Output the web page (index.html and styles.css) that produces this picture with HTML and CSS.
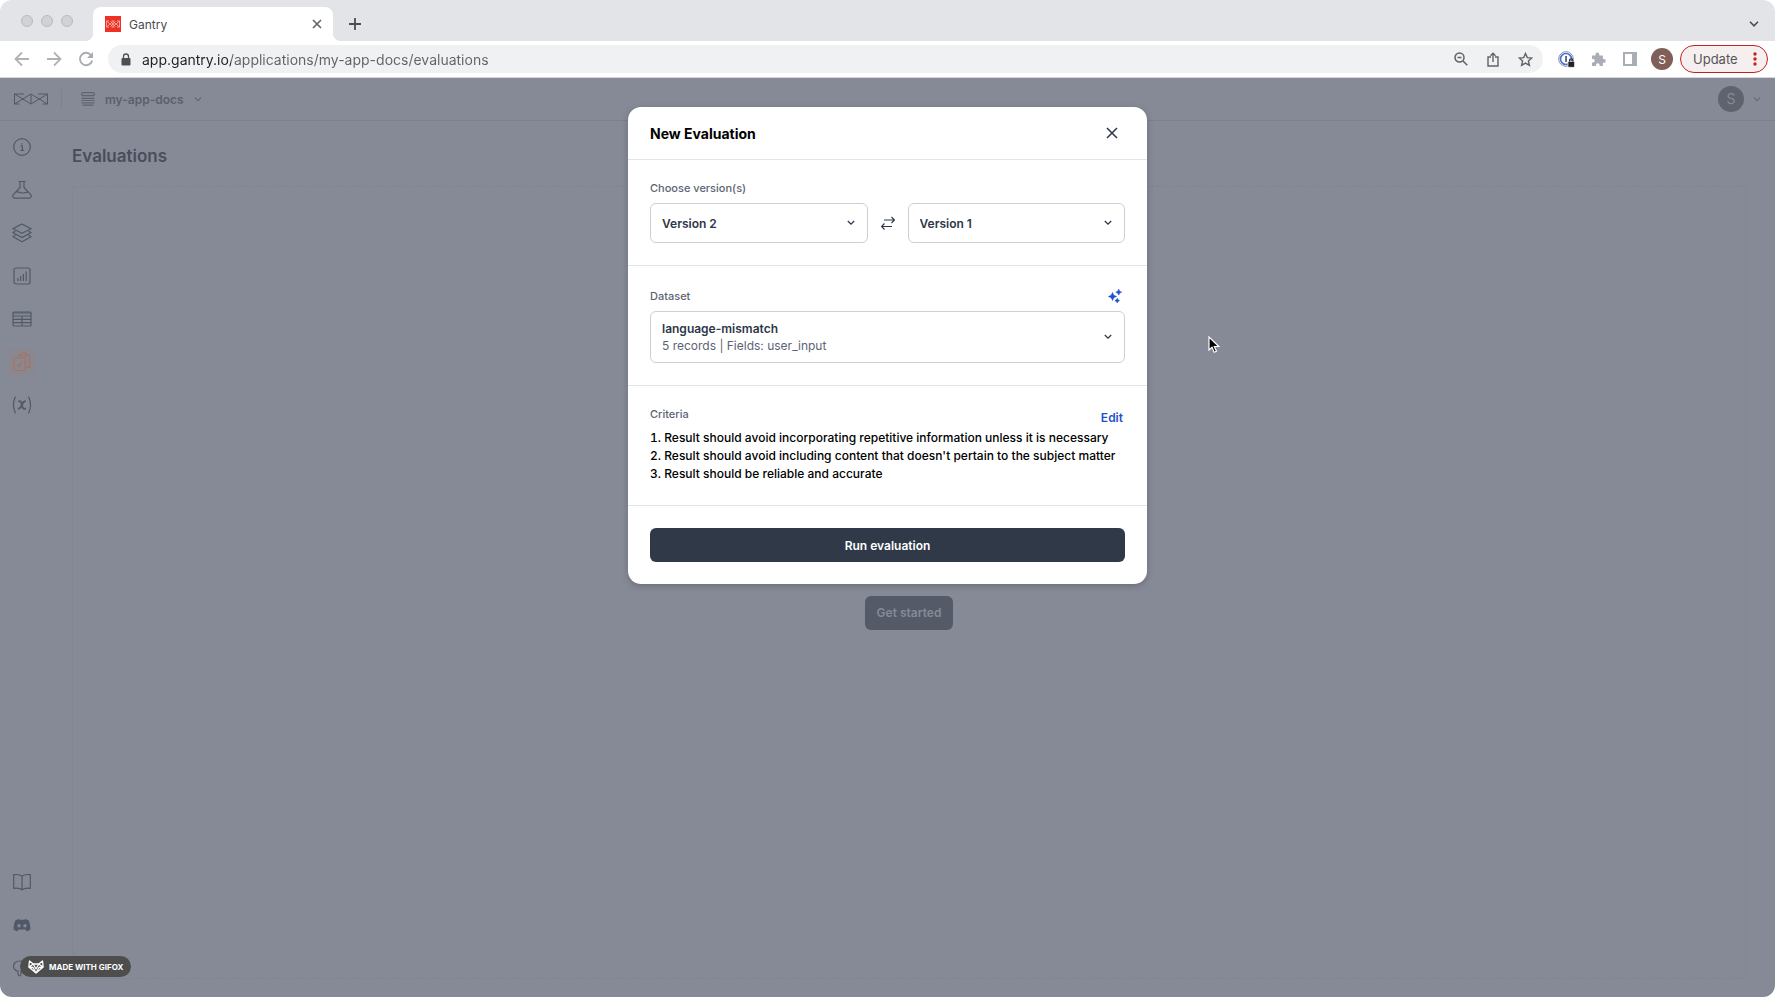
FILE: index.html
```html
<!DOCTYPE html>
<html lang="en">
<head>
<meta charset="UTF-8" />
<title>Gantry</title>
<link rel="stylesheet" href="styles.css">
</head>
<body>

<div class="window">

  <!-- browser tabs -->
  <div class="tabstrip">
    <div class="lights"><i></i><i></i><i></i></div>
    <div class="tab">
      <svg class="favicon" width="16" height="16" viewBox="0 0 16 16"><rect width="16" height="16" fill="#ee3124"/><path d="M1.500 5v6L8 5.500l6.500 5.500V5L8 10.500 1.500 5M5.500 5.500l5 5M10.500 5.500l-5 5M1.500 5H4M12 5h2.500M1.500 11H4M12 11h2.500M6.500 5h3M6.500 11h3" fill="none" stroke="#fbc5bd" stroke-width=".7"/></svg>
      <span class="tab-title">Gantry</span>
      <button class="icon-btn" aria-label="Close tab"><svg width="10" height="10" viewBox="0 0 10 10"><path d="M1 1l8 8M9 1L1 9" stroke="#5f6368" stroke-width="1.6"/></svg></button>
    </div>
    <button class="icon-btn new-tab" aria-label="New tab"><svg width="12" height="12" viewBox="0 0 12 12"><path d="M6 0v12M0 6h12" stroke="#4a4d51" stroke-width="1.8"/></svg></button>
    <button class="icon-btn tab-search" aria-label="Search tabs"><svg width="10" height="6" viewBox="0 0 10 6"><path d="M1 .8l4 4 4-4" fill="none" stroke="#4a4d51" stroke-width="1.6"/></svg></button>
  </div>

  <!-- browser toolbar -->
  <div class="toolbar">
    <button class="icon-btn" aria-label="Back"><svg width="16" height="16" viewBox="0 0 16 16"><path d="M15 8H2M8 1.500L1.500 8 8 14.500" fill="none" stroke="#b0b2b6" stroke-width="1.800"/></svg></button>
    <button class="icon-btn" aria-label="Forward"><svg width="16" height="16" viewBox="0 0 16 16"><path d="M1 8h13M8 1.500L14.500 8 8 14.500" fill="none" stroke="#b0b2b6" stroke-width="1.800"/></svg></button>
    <button class="icon-btn" aria-label="Reload"><svg width="16" height="16" viewBox="0 0 16 16"><path d="M13.300 4.500A6.200 6.200 0 1 0 14.200 9.500" fill="none" stroke="#a9acb0" stroke-width="1.900"/><path d="M15 1v6H9z" fill="#a9acb0"/></svg></button>
    <div class="omnibox">
      <svg width="10" height="13" viewBox="0 0 10 13"><path d="M2.500 5.500V3.500a2.500 2.500 0 0 1 5 0v2" fill="none" stroke="#4d5156" stroke-width="1.300"/><rect x=".5" y="5" width="9" height="7.500" rx="1" fill="#4d5156"/></svg>
      <input class="url" type="text" aria-label="Address" value="app.gantry.io/applications/my-app-docs/evaluations">
      <button class="icon-btn" aria-label="Zoom"><svg width="14" height="14" viewBox="0 0 14 14" fill="none" stroke="#5f6368" stroke-width="1.500"><circle cx="5.500" cy="5.500" r="4.500"/><path d="M9 9l4.300 4.300M3.500 5.500h4"/></svg></button>
      <button class="icon-btn" aria-label="Share"><svg width="12" height="15" viewBox="0 0 12 15" fill="none" stroke="#5f6368" stroke-width="1.400"><path d="M4 5H1v9h10V5H8M6 10V1.500M3.500 3.700L6 1.200l2.500 2.500"/></svg></button>
      <button class="icon-btn" aria-label="Bookmark"><svg width="15" height="15" viewBox="0 0 15 15" fill="none" stroke="#5f6368" stroke-width="1.400"><path d="M7.500 1.500l1.800 4.100 4.500.4-3.400 3 1 4.400-3.900-2.300-3.900 2.300 1-4.400-3.400-3 4.500-.4z"/></svg></button>
    </div>
    <button class="icon-btn" aria-label="Password manager"><svg width="17" height="17" viewBox="0 0 17 17"><circle cx="8" cy="8" r="7.300" fill="none" stroke="#8a93a3" stroke-width="1"/><circle cx="8" cy="8" r="5.500" fill="#fff" stroke="#4a74d8" stroke-width="1.700"/><rect x="7.200" y="5" width="1.700" height="6" fill="#4d5870"/><rect x="10" y="10.500" width="6.500" height="5.800" rx=".8" fill="#202124" stroke="#fff" stroke-width=".6"/><path d="M11.600 10.500V9.300a1.600 1.600 0 0 1 3.200 0v1.200" fill="none" stroke="#202124" stroke-width="1.100"/></svg></button>
    <button class="icon-btn" aria-label="Extensions"><svg width="15" height="15" viewBox="0 0 15 15"><path d="M1 3.500h3.500V2.400a1.900 1.900 0 0 1 3.800 0v1.100h3.600V7h1a1.900 1.900 0 0 1 0 3.800h-1V14H8.600v-1a1.800 1.800 0 0 0-3.600 0v1H1v-3.600h1a1.700 1.700 0 0 0 0-3.400H1z" fill="#a9adb5"/></svg></button>
    <button class="icon-btn" aria-label="Side panel"><svg width="14" height="14" viewBox="0 0 14 14"><rect x="1" y="1" width="12" height="12" fill="#fff" stroke="#a9adb5" stroke-width="2"/><path d="M9 0h5v14H9z" fill="#a9adb5"/></svg></button>
    <button class="profile" aria-label="Profile">S</button>
    <button class="update">Update
      <svg width="4" height="14" viewBox="0 0 4 14" fill="#c5221f"><circle cx="2" cy="2" r="1.700"/><circle cx="2" cy="7" r="1.700"/><circle cx="2" cy="12" r="1.700"/></svg>
    </button>
  </div>

  <div class="app">
    <header class="app-header">
      <a class="logo" href="#" aria-label="Gantry"><svg width="34" height="12" viewBox="0 0 34 12" fill="none" stroke="#515867"><path d="M.5 1v10L17 1v10L.5 1M33.500 1v10L17 1M33.500 1L17 11M.5 1H10M24 1h9.500M.5 11h5M28.500 11h5"/></svg></a>
      <button class="app-picker">
        <svg width="14" height="14" viewBox="0 0 14 14" fill="none" stroke="#5d6472" stroke-width="1.200"><rect x=".7" y=".7" width="12.600" height="3" rx="1"/><path d="M.5 6.300h13M.5 8.500h13M.5 10.800h13M1.500 13.200h11"/></svg>
        <span>my-app-docs</span>
        <svg width="8" height="5" viewBox="0 0 8 5"><path d="M1 .7l3 3 3-3" fill="none" stroke="#5d6472" stroke-width="1.200"/></svg>
      </button>
      <button class="account" aria-label="Account">
        <span>S</span>
        <svg width="8" height="5" viewBox="0 0 8 5"><path d="M1 .7l3 3 3-3" fill="none" stroke="#656b78" stroke-width="1.200"/></svg>
      </button>
    </header>

    <nav class="sidebar">
      <a href="#" aria-label="Overview"><svg width="20" height="20" viewBox="0 0 20 20"><circle cx="10" cy="10" r="8.300"/><path d="M8.700 8.800h1.600v4.400M8.500 13.400h3.400M9.900 6.200v1.200"/></svg></a>
      <a href="#" aria-label="Experiments"><svg width="20" height="20" viewBox="0 0 20 20"><path d="M6.500 1.500h7M8 1.500v6L1.300 14.500c-1.200 2-.2 3.700 1.700 3.700h14c1.900 0 2.900-1.700 1.700-3.700L12 7.500v-6M4 12c3-1 4 1.300 7 1 2-.2 3-.8 4.800-.5"/></svg></a>
      <a href="#" aria-label="Versions"><svg width="20" height="20" viewBox="0 0 20 20"><path d="M10 1l9 4.700-9 4.700-9-4.700zM3.500 8L1 9.500l9 5 9-5L16.500 8M3.500 12L1 13.700l9 5 9-5-2.500-1.700"/></svg></a>
      <a href="#" aria-label="Charts"><svg width="20" height="20" viewBox="0 0 20 20"><rect x="2" y="2" width="16" height="16" rx="2"/><path d="M6 12v3M8.700 10v5M11.400 8v7M14.200 5.500V15"/></svg></a>
      <a href="#" aria-label="Data"><svg width="20" height="20" viewBox="0 0 20 20"><rect x="1" y="3" width="18" height="14" rx="1"/><path d="M1 7h18M1 10.300h18M1 13.600h18M10 7v10M1 4h18"/></svg></a>
      <a class="active" href="#" aria-label="Evaluations"><svg width="20" height="20" viewBox="0 0 20 20"><path d="M6.500 5V3.300H9M14 3.300h3.500v12.200h-4M2.200 6h11v12.500h-11zM5.500 12.300l1.700 2 3-4"/><rect x="9" y="1" width="5" height="3" rx="1.200"/></svg></a>
      <a href="#" aria-label="Variables"><svg width="20" height="20" viewBox="0 0 20 20"><path d="M3.500 1.500c-2.400 5-2.400 12 0 17M16.500 1.500c2.400 5 2.400 12 0 17"/><path d="M6.200 6.500c2.500-1.300 3 .5 3.700 3.500s1.700 5 3.900 3.300M13.700 6.300c-2.200-.6-3 1.700-3.800 3.700-.9 2-1.900 4.300-4 3.500" stroke-width="1.800"/></svg></a>
      <a class="bottom" href="#" aria-label="Docs"><svg width="20" height="20" viewBox="0 0 20 20"><path d="M10 4.200C8 2.500 4.500 2.300 1.700 2.700v13.600c3-.4 6.300-.2 8.300 1.500 2-1.700 5.300-1.900 8.300-1.500V2.700C15.500 2.300 12 2.500 10 4.200zM10 4.200v13.600"/></svg></a>
      <a href="#" aria-label="Discord"><svg width="20" height="20" viewBox="0 0 20 20"><path fill="#515867" fill-rule="evenodd" stroke="none" d="M7.500 4L7 4.800h6L12.500 4c1.500.1 2.800.6 4 1.300 1.300 2.500 2 5.500 1.900 9.200-1.300 1-2.700 1.500-4 1.700l-1-1.700H6.600l-1 1.700c-1.300-.2-2.700-.7-4-1.700-.1-3.700.6-6.700 1.900-9.200C4.700 4.600 6 4.100 7.500 4zM7 9a1.600 1.600 0 1 0 0 3.400A1.600 1.600 0 1 0 7 9zm6 0a1.600 1.600 0 1 0 0 3.400A1.600 1.600 0 1 0 13 9z"/></svg></a>
      <a href="#" aria-label="Feedback"><svg width="20" height="20" viewBox="0 0 20 20"><path d="M8 3C4 3 1.500 5.200 1.500 8.200S4 13 6 13v3.500c1 2 3 1.500 3-.5v-3h4c6 0 6-10-5-10z"/></svg></a>
    </nav>

    <main class="content">
      <h1>Evaluations</h1>
      <div class="empty">
        <button class="get-started">Get started</button>
      </div>
    </main>

    <div class="overlay">
      <form class="modal" role="dialog" aria-labelledby="modal-title">
        <div class="modal-header">
          <h2 id="modal-title">New Evaluation</h2>
          <button type="button" class="icon-btn" aria-label="Close"><svg width="12" height="12" viewBox="0 0 12 12"><path d="M1 1l10 10M11 1L1 11" stroke="#2d3748" stroke-width="1.500"/></svg></button>
        </div>

        <div class="section">
          <label class="label" for="version-a">Choose version(s)</label>
          <div class="versions">
            <div class="select">
              <select id="version-a"><option>Version 2</option><option>Version 1</option></select>
              <svg class="chevron" width="8" height="6" viewBox="0 0 8 6"><path d="M.8 1L4 4.200 7.200 1"/></svg>
            </div>
            <button type="button" class="icon-btn" aria-label="Swap versions"><svg width="14" height="14" viewBox="0 0 14 14" fill="none" stroke="#2d3748" stroke-width="1.200"><path d="M3 4h10.500M10.500 1l3 3-3 3M11 10.500H.5M3.500 7.500l-3 3 3 3"/></svg></button>
            <div class="select">
              <select id="version-b" aria-label="Compare with version"><option>Version 1</option><option>Version 2</option></select>
              <svg class="chevron" width="8" height="6" viewBox="0 0 8 6"><path d="M.8 1L4 4.200 7.200 1"/></svg>
            </div>
          </div>
        </div>

        <div class="section">
          <div class="section-head">
            <label class="label" for="dataset">Dataset</label>
            <button type="button" class="icon-btn" aria-label="Generate dataset"><svg width="14" height="14" viewBox="0 0 14 14" fill="#1d4fd0"><path d="M4.500 3.500l1.200 2.800L8.500 7.500 5.700 8.700l-1.200 2.800-1.200-2.800L.5 7.500l2.800-1.200zM10.700.3l.9 2 2 .9-2 .9-.9 2-.9-2-2-.9 2-.9zM9.200 9.300l.8 1.500 1.500.8-1.500.8-.8 1.500-.8-1.500-1.500-.8 1.500-.8z" stroke="#1d4fd0" stroke-width=".6"/></svg></button>
          </div>
          <div class="select dataset">
            <select id="dataset"><option>language-mismatch</option></select>
            <span class="meta">5 records | Fields: user_input</span>
            <svg class="chevron" width="8" height="6" viewBox="0 0 8 6"><path d="M.8 1L4 4.200 7.200 1"/></svg>
          </div>
        </div>

        <div class="section">
          <div class="section-head criteria-head">
            <span class="label">Criteria</span>
            <a class="edit" href="#">Edit</a>
          </div>
          <ol class="criteria">
            <li>Result should avoid incorporating repetitive information unless it is necessary</li>
            <li>Result should avoid including content that doesn't pertain to the subject matter</li>
            <li>Result should be reliable and accurate</li>
          </ol>
        </div>

        <div class="section">
          <button type="button" class="run">Run evaluation</button>
        </div>
      </form>
    </div>
  </div>

  <div class="gifox">
    <svg width="16" height="14" viewBox="0 0 16 14" fill="none" stroke="#fff" stroke-width="1.300" stroke-linejoin="round"><path d="M1.500 1l3.700 3h5.600l3.700-3 .7 6L8 13 .8 7zM1 7l4.200-3L8 9l2.800-5L15 7l-4 .5L8 13 5 7.500z"/></svg>
    MADE WITH GIFOX
  </div>

  <svg class="cursor" width="13" height="18" viewBox="0 0 13 18"><path d="M1 1v13l3-2.700 2.200 5 2.300-1-2.200-4.800h4.500z" fill="#000" stroke="#fff" stroke-width="1.200"/></svg>
</div>

</body>
</html>
```
FILE: styles.css
```css
* {
  box-sizing: border-box;
}
body {
  margin: 0;
  background: #fff;
  font-family: Inter, sans-serif;
  font-size: 12px;
}
button, input, select {
  font: inherit;
}
button {
  cursor: pointer;
}
a {
  text-decoration: none;
}
svg {
  display: block;
  flex: none;
}
h1, h2, ol {
  margin: 0;
  padding: 0;
}
.window {
  position: relative;
  display: flex;
  flex-direction: column;
  min-height: 100vh;
  border-radius: 12px;
  overflow: hidden;
}
.icon-btn {
  display: flex;
  align-items: center;
  justify-content: center;
  width: 16px;
  height: 16px;
  padding: 0;
  background: none;
  border: none;
  flex: none;
}

/* tabs */
.tabstrip {
  display: flex;
  align-items: center;
  height: 41px;
  padding: 7px 13px 0 21px;
  background: #e3e4e8;
}
.lights {
  display: flex;
  gap: 8px;
  margin: 0 20px 7px 0;
}
.lights i {
  width: 12px;
  height: 12px;
  border: 1px solid #b9babd;
  border-radius: 50%;
  background: #d1d2d4;
}
.tab {
  position: relative;
  display: flex;
  align-items: center;
  width: 240px;
  height: 34px;
  padding: 0 8px 0 12px;
  border-radius: 8px 8px 0 0;
  background: #fff;
}
.tab::before, .tab::after {
  content: "";
  position: absolute;
  bottom: 0;
  width: 8px;
  height: 8px;
}
.tab::before {
  left: -8px;
  background: radial-gradient(circle at 0 0, #e3e4e8 8px, #fff 8px);
}
.tab::after {
  right: -8px;
  background: radial-gradient(circle at 100% 0, #e3e4e8 8px, #fff 8px);
}
.tab-title {
  flex: 1;
  margin-left: 8px;
  color: #4a4d51;
}
.new-tab {
  margin-left: 14px;
}
.tab-search {
  margin-left: auto;
}

/* toolbar */
.toolbar {
  display: flex;
  align-items: center;
  gap: 16px;
  height: 37px;
  padding: 0 7px 0 14px;
  border-bottom: 1px solid #d5d6da;
  background: #fff;
}
.omnibox {
  display: flex;
  align-items: center;
  gap: 16px;
  flex: 1;
  height: 28px;
  margin: 0 -1px 0 -2px;
  padding: 0 10px 0 13px;
  border-radius: 14px;
  background: #f0f1f2;
}
.url {
  flex: 1;
  height: 28px;
  margin-left: -5px;
  padding: 0;
  border: none;
  outline: none;
  font-size: 14px;
  color: #202124;
  /* host is darker than the path */
  background: linear-gradient(90deg, #202124 89px, #5f6368 89px);
  -webkit-background-clip: text;
  background-clip: text;
  -webkit-text-fill-color: transparent;
}
.profile {
  width: 22px;
  height: 22px;
  margin-left: -3px;
  padding: 0;
  border: none;
  border-radius: 50%;
  background: #7f5f58;
  color: #fff;
}
.update {
  display: flex;
  align-items: center;
  justify-content: space-between;
  width: 88px;
  height: 28px;
  margin-left: -9px;
  padding: 0 10px 0 12px;
  border: 1px solid #c5221f;
  border-radius: 14px;
  background: #f5efef;
  color: #55565a;
  font-size: 13px;
}

/* app */
.app {
  position: relative;
  flex: 1;
  display: grid;
  grid-template: 43px 1fr / 43px 1fr;
  background: #868a96;
  color: #515867;
}
.app-header {
  grid-column: 1 / 3;
  display: flex;
  align-items: center;
  padding: 0 14px;
  border-bottom: 1px solid #7b808c;
}
.logo {
  padding: 4px 13px 4px 0;
  border-right: 1px solid #7e828f;
}
.app-picker, .account {
  display: flex;
  align-items: center;
  padding: 0;
  border: none;
  background: none;
  color: #5a606e;
}
.app-picker {
  gap: 10px;
  margin-left: 19px;
  font-weight: 600;
}
.account {
  gap: 9px;
  margin-left: auto;
}
.account span {
  width: 26px;
  height: 26px;
  border-radius: 50%;
  background: #5f636e;
  color: #868a96;
  font-size: 14px;
  line-height: 26px;
}
.sidebar {
  display: flex;
  flex-direction: column;
  align-items: center;
  gap: 15px;
  padding: 12px 0 15px;
}
.sidebar a {
  display: flex;
  align-items: center;
  justify-content: center;
  width: 28px;
  height: 28px;
  border-radius: 4px;
}
.sidebar svg {
  fill: none;
  stroke: #515867;
  stroke-width: 1.2;
}
.sidebar .active {
  background: #8a8790;
}
.sidebar .active svg {
  stroke: #a57360;
}
.sidebar .bottom {
  margin-top: auto;
}
.content {
  display: flex;
  flex-direction: column;
  padding: 23px 29px 18px 29px;
}
.content h1 {
  font-size: 17px;
  font-weight: 600;
  line-height: 24px;
  color: #484e5d;
}
.empty {
  flex: 1;
  display: flex;
  align-items: center;
  justify-content: center;
  margin-top: 18px;
  padding-top: 60px;
  border: 1px dashed #7f8491;
  border-radius: 4px;
}
.get-started {
  height: 34px;
  padding: 0 12px;
  border: none;
  border-radius: 6px;
  background: #545a68;
  color: #868a96;
  font-weight: 600;
}

/* modal */
.overlay {
  position: absolute;
  inset: 0;
  display: flex;
  justify-content: center;
  align-items: flex-start;
  padding-top: 29px;
}
.modal {
  width: 519px;
  border-radius: 13px;
  background: #fff;
  box-shadow: 0 2px 6px rgba(40, 45, 60, 0.3);
  color: #000;
}
.modal-header {
  display: flex;
  align-items: center;
  justify-content: space-between;
  height: 52px;
  padding: 0 27px 0 22px;
}
.modal h2 {
  font-size: 14px;
  font-weight: 700;
}
.section {
  padding: 22px;
  border-top: 1px solid #e2e4e8;
}
.section-head {
  display: flex;
  align-items: center;
  justify-content: space-between;
  height: 16px;
  margin-bottom: 7px;
  padding-right: 2px;
}
.label {
  display: block;
  font-size: 11px;
  font-weight: 500;
  line-height: 12px;
  color: #5c6474;
}
.versions {
  display: flex;
  align-items: center;
  gap: 12px;
  margin-top: 9px;
}
.select {
  position: relative;
  flex: 1;
}
.select select {
  display: block;
  width: 100%;
  height: 40px;
  padding: 0 30px 0 11px;
  border: 1px solid #cbcfd8;
  border-radius: 6px;
  background: #fff;
  appearance: none;
  font-weight: 600;
  color: #2d3748;
}
.dataset select {
  height: 52px;
  padding-bottom: 18px;
}
.meta {
  position: absolute;
  left: 12px;
  bottom: 8px;
  line-height: 18px;
  color: #5c6474;
  pointer-events: none;
}
.chevron {
  position: absolute;
  right: 13px;
  top: calc(50% - 3px);
  fill: none;
  stroke: #2d3748;
  stroke-width: 1.3;
  pointer-events: none;
}
.criteria-head {
  align-items: flex-start;
  height: 21px;
  margin: 0;
}
.edit {
  font-weight: 600;
  line-height: 20px;
  color: #2451cc;
}
.criteria {
  list-style-position: inside;
  font-weight: 500;
  line-height: 18px;
}
.run {
  display: block;
  width: 100%;
  height: 34px;
  border: none;
  border-radius: 6px;
  background: #2f3948;
  color: #fff;
  font-weight: 600;
}

/* things floating over the page */
.gifox {
  position: absolute;
  left: 20px;
  bottom: 20px;
  display: flex;
  align-items: center;
  gap: 5px;
  height: 21px;
  padding: 0 8px;
  border-radius: 11px;
  background: #4d4d4d;
  color: #fff;
  font-size: 8px;
  font-weight: 700;
}
.cursor {
  position: absolute;
  left: 1208px;
  top: 336px;
}
```
